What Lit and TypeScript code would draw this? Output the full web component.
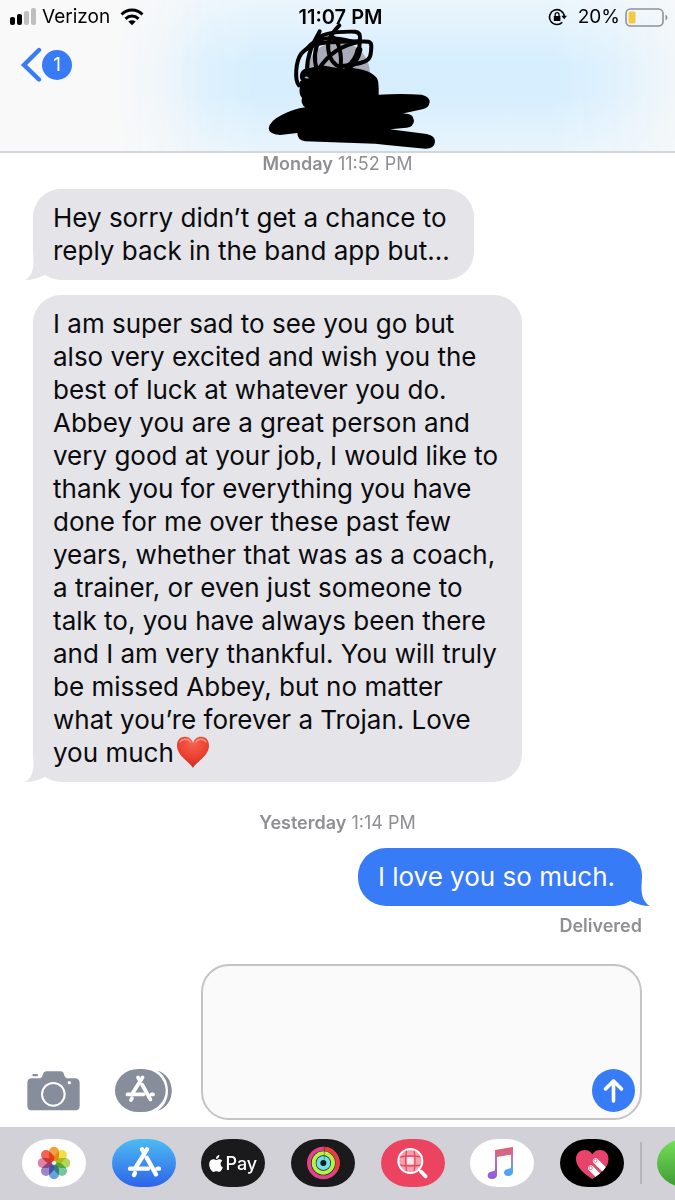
import { LitElement, html, svg, css } from "lit";
import { customElement, property } from "lit/decorators.js";

type Message = { from: "them" | "me"; lines: string[]; heart?: boolean };

const FIRST: Message[] = [
  {
    from: "them",
    lines: ["Hey sorry didn’t get a chance to", "reply back in the band app but..."],
  },
  {
    from: "them",
    heart: true,
    lines: [
      "I am super sad to see you go but",
      "also very excited and wish you the",
      "best of luck at whatever you do.",
      "Abbey you are a great person and",
      "very good at your job, I would like to",
      "thank you for everything you have",
      "done for me over these past few",
      "years, whether that was as a coach,",
      "a trainer, or even just someone to",
      "talk to, you have always been there",
      "and I am very thankful. You will truly",
      "be missed Abbey, but no matter",
      "what you’re forever a Trojan. Love",
      "you much",
    ],
  },
];

const REPLY: Message = { from: "me", lines: ["I love you so much."] };

const storeGlyph = (color: string) => svg`
  <g fill="none" stroke=${color} stroke-width="13" stroke-linecap="round">
    <path d="M105 31 L72 84" />
    <path d="M90 31 L97 42 M104 56 L132 106" />
    <path d="M54 89 H108 M136 89 H141" />
    <path d="M69 102 L66 108" />
  </g>`;

@customElement("chat-bubble")
class ChatBubble extends LitElement {
  @property({ attribute: false }) message!: Message;

  static styles = css`
    :host {
      display: flex;
    }
    .bubble {
      position: relative;
      padding: 12px 20px 13px;
      border-radius: 28px;
      font-size: 26px;
      line-height: 33px;
      white-space: pre-line;
    }
    .them {
      background: #e4e4e9;
      color: #0b0b0d;
      padding-right: 24px;
    }
    .me {
      margin-left: auto;
      background: #387bf6;
      color: #fff;
      padding-right: 27px;
    }
    .tail {
      position: absolute;
      bottom: 0;
      width: 24px;
      height: 24px;
    }
    .them .tail {
      left: -8px;
      fill: #e4e4e9;
    }
    .me .tail {
      right: -8px;
      fill: #387bf6;
    }
    .heart {
      width: 34px;
      height: 33px;
      margin: 0 0 0 2px;
      vertical-align: top;
    }
  `;

  render() {
    const m = this.message;
    const tail =
      m.from === "me"
        ? "M15.500 0 V6 C15.500 14 18 21 24 24 Q14 24 4.500 19 L9 0Z"
        : "M8.500 0 V6 C8.500 14 6 21 0 24 Q10 24 19.500 19 L15 0Z";
    return html`<div class="bubble ${m.from}">${m.lines.join("\n")}${m.heart
      ? html`<svg class="heart" viewBox="0 0 34 33" role="img" aria-label="red heart">
          <defs>
            <radialGradient id="hg" cx="0.5" cy="0.2" r="0.8">
              <stop offset="0" stop-color="#f8624f" />
              <stop offset="0.6" stop-color="#ea3f31" />
              <stop offset="1" stop-color="#c92a20" />
            </radialGradient>
          </defs>
          <path d="M17 32 C14 26 1 20 1 9.500 C1 4 4.500 .8 9 .8 C13 .8 16 3.500 17 7 C18 3.500 21 .8 25 .8 C29.500 .8 33 4 33 9.500 C33 20 20 26 17 32Z" fill="url(#hg)" />
          <path d="M4 6 C6 2.500 12 2 14.500 6 M20 6 C22.500 2 28 2.500 30 6" fill="none" stroke="#ffa79a" stroke-width="1.500" stroke-linecap="round" opacity=".75" />
        </svg>`
      : ""}<svg class="tail" viewBox="0 0 24 24" aria-hidden="true"><path d=${tail} /></svg></div>`;
  }
}

@customElement("app-root")
class AppRoot extends LitElement {
  static styles = css`
    :host {
      display: flex;
      flex-direction: column;
      min-height: 100vh;
      overflow: hidden;
      background: #fff;
      color: #000;
      font-family: Inter, "Liberation Sans", sans-serif;
    }
    button {
      border: 0;
      padding: 0;
      background: none;
      font: inherit;
      color: inherit;
      cursor: pointer;
    }
    svg {
      display: block;
    }
    .header {
      position: relative;
      box-sizing: border-box;
      height: 153px;
      border-bottom: 2px solid #d3d7db;
      background: #f9f9f9;
    }
    .glow {
      position: absolute;
      inset: 0;
      background: linear-gradient(#ebf5fc, #d6eefe 42%, #d6eefe 62%, #e8f4fc);
      mask-image: linear-gradient(
        to right,
        transparent 17%,
        rgb(0 0 0 / 0.25) 24%,
        rgb(0 0 0 / 0.8) 31%,
        #000 38%,
        #000 82%,
        rgb(0 0 0 / 0.75) 90%,
        rgb(0 0 0 / 0.2) 100%
      );
    }
    .status {
      position: relative;
      display: grid;
      grid-template-columns: 1fr auto 1fr;
      align-items: center;
      height: 34px;
      padding: 0 7px 0 9px;
      font-size: 19px;
      line-height: 24px;
    }
    .side {
      display: flex;
      align-items: center;
      gap: 5px;
    }
    .end {
      justify-content: flex-end;
    }
    .time {
      padding-left: 4px;
      font-size: 20px;
      font-weight: 600;
    }
    .wifi {
      margin-left: 5px;
    }
    .lock {
      margin-right: 5px;
    }
    .back {
      position: relative;
      display: flex;
      align-items: center;
      margin: 13px 0 0 20px;
    }
    .count {
      width: 30px;
      height: 30px;
      border-radius: 50%;
      background: #387bf6;
      color: #fff;
      font-size: 19px;
      line-height: 30px;
      text-align: center;
    }
    .scribble {
      position: absolute;
      top: 0;
      left: calc(50% - 113px);
    }
    .thread {
      display: flex;
      flex-direction: column;
      gap: 15px;
      padding: 0 33px;
    }
    .stamp {
      margin: 0;
      text-align: center;
      font-size: 18px;
      line-height: 21px;
      color: #8e8e93;
    }
    .later {
      margin-top: 15px;
    }
    .stamp b,
    .receipt {
      font-weight: 600;
    }
    .receipt {
      margin: -6px 0 0;
      text-align: right;
      font-size: 18px;
      line-height: 21px;
      color: #8e8e93;
    }
    .composer {
      display: flex;
      align-items: flex-end;
      margin-top: auto;
      padding: 16px 33px 7px 27px;
    }
    .tool {
      margin-bottom: 8px;
    }
    .store {
      margin: 0 29px 8px 35px;
    }
    .field {
      position: relative;
      flex: 1;
      min-width: 0;
      display: flex;
    }
    .input {
      flex: 1;
      min-width: 0;
      height: 156px;
      box-sizing: border-box;
      margin: 0;
      padding: 12px 60px 12px 20px;
      border: 2px solid #c3c3c8;
      border-radius: 28px;
      background: #fafafa;
      font: 26px/33px Inter, "Liberation Sans", sans-serif;
      resize: none;
      outline: none;
    }
    .send {
      position: absolute;
      right: 7px;
      bottom: 8px;
    }
    .drawer {
      display: flex;
      align-items: center;
      box-sizing: border-box;
      height: 73px;
      padding: 0 0 1px 22px;
      background: #d1d1d7;
    }
    .apps {
      flex: 1;
      display: flex;
      justify-content: space-between;
    }
    .app {
      width: 64px;
      height: 48px;
      border-radius: 28px / 24px;
      overflow: hidden;
    }
    .white {
      background: #fff;
    }
    .appstore {
      background: linear-gradient(#4dbcf2, #2d63ea);
    }
    .dark {
      background: #1a1a1c;
    }
    .black {
      background: #000;
    }
    .red {
      background: #ec4460;
    }
    .pay {
      display: flex;
      align-items: center;
      justify-content: center;
      gap: 2px;
      color: #fff;
      font-size: 18px;
      font-weight: 500;
    }
    .divider {
      width: 2px;
      height: 42px;
      margin: 0 15px 0 16px;
      background: #b4b4ba;
    }
    .peek {
      width: 18px;
      overflow: hidden;
      display: flex;
    }
    .green {
      flex: none;
      background: linear-gradient(#75e05a, #3f9a33);
    }
    .petal {
      mix-blend-mode: multiply;
    }
  `;

  private header() {
    return html`<header class="header">
      <div class="glow"></div>
      <div class="status">
        <div class="side">
          <svg width="28" height="18" viewBox="0 0 28 18" role="img" aria-label="Signal strength">
            <rect x="1" y="9" width="5" height="8" rx="2" />
            <rect x="8" y="6" width="5" height="11" rx="2" />
            <rect x="15" y="3" width="5" height="14" rx="2" fill="#bfbfc1" />
            <rect x="22" y="0" width="5" height="17" rx="2" fill="#bfbfc1" />
          </svg>
          <span>Verizon</span>
          <svg class="wifi" width="24" height="18" viewBox="0 0 24 18" role="img" aria-label="Wi-Fi">
            <g fill="none" stroke="#000" stroke-width="3">
              <path d="M1.500 6.500 C7.500 .500 16.500 .500 22.500 6.500" />
              <path d="M5.500 10.800 C9.300 7.200 14.700 7.200 18.500 10.800" />
            </g>
            <path d="M8.300 13.500 Q12 10.800 15.700 13.500 L12 17.200Z" />
          </svg>
        </div>
        <span class="time">11:07 PM</span>
        <div class="side end">
          <svg class="lock" width="20" height="18" viewBox="0 0 20 18" role="img" aria-label="Rotation locked">
            <path d="M14.300 14.200 A7.400 7.400 0 1 1 16.300 8.500" fill="none" stroke="#000" stroke-width="1.600" />
            <path d="M13.300 7.800 H19 L16.200 11.300Z" />
            <rect x="5.800" y="8" width="6.600" height="5" rx=".6" />
            <path d="M7.200 8.500 V6.500 A1.900 1.900 0 0 1 11 6.500 V8.500" fill="none" stroke="#000" stroke-width="1.300" />
          </svg>
          <span>20%</span>
          <svg width="43" height="19" viewBox="0 0 43 19" role="img" aria-label="Battery">
            <rect x="1" y="1" width="37" height="17" rx="4.500" fill="none" stroke="#8d939b" stroke-width="1.600" />
            <rect x="3.500" y="3.500" width="7" height="12" rx="1.500" fill="#f6c940" />
            <path d="M40.500 6.500 Q42.500 7.500 42.500 9.500 Q42.500 11.500 40.500 12.500Z" fill="#8d939b" />
          </svg>
        </div>
      </div>
      <button class="back" aria-label="Back, 1 unread">
        <svg width="22" height="36" viewBox="0 0 22 36">
          <path d="M19 3 L4 18 L19 32.500" fill="none" stroke="#387bf6" stroke-width="4.400" stroke-linecap="round" stroke-linejoin="miter" />
        </svg>
        <span class="count">1</span>
      </button>
      <svg class="scribble" width="225" height="152" viewBox="0 0 675 456" aria-hidden="true">
        <circle cx="340" cy="220" r="95" fill="#a9abb8" />
        <path d="M226 220 Q232 204 255 204 L290 196 L350 206 L378 203 Q440 210 456 235 Q462 245 461 284 Q530 280 590 284 Q614 290 614 306 Q612 324 592 328 L530 341 Q566 338 567 362 Q566 380 545 383 L495 388 L605 402 Q632 408 630 426 Q628 446 602 446 Q520 438 450 431 L240 424 Q217 420 217 399 L165 405 Q131 402 131 385 Q135 362 170 345 Q205 327 241 322 Q226 312 231 293 Q220 282 225 260 Q222 240 230 243 Q222 235 226 220Z" />
        <g fill="none" stroke="#000" stroke-width="12" stroke-linecap="round" stroke-linejoin="round">
          <path d="M222 256 C208 240 212 185 228 162 C245 140 280 128 310 127 C350 126 390 122 430 125 Q440 128 439 140 C438 165 436 178 420 184 C400 192 375 196 350 198" />
          <path d="M284 94 C272 118 246 155 246 212" />
          <path d="M343 76 C315 105 306 125 310 150 C314 178 325 196 350 202" />
          <path d="M272 120 C290 98 340 94 390 95 Q406 97 405 112 C404 150 400 175 375 198" />
          <path d="M405 125 C345 135 310 165 280 208" />
          <path d="M284 120 C266 150 268 185 276 210" />
          <path d="M325 112 C342 125 352 165 346 205" />
          <path d="M246 146 C275 105 330 112 380 124" />
          <path d="M402 150 C396 176 384 192 368 202" stroke-width="20" />
        </g>
        <path d="M238 232 Q246 226 252 234 Q244 238 238 232Z" fill="#a9abb8" />
      </svg>
    </header>`;
  }

  private photos() {
    const petals = ["#f4a040", "#efdf45", "#b2d560", "#78c79a", "#6aa0dc", "#a086c8", "#dc84a8", "#ef6452"];
    return svg`<svg viewBox="0 0 192 144" width="64" height="48">
      ${petals.map(
        (c, i) =>
          svg`<rect class="petal" x="81" y="23" width="30" height="44" rx="15" fill=${c} transform="rotate(${i * 45} 96 72)" />`
      )}
      <circle cx="96" cy="72" r="4" fill="#fff" />
    </svg>`;
  }

  private drawer() {
    return html`<nav class="drawer" aria-label="Message apps">
      <div class="apps">
        <button class="app white" aria-label="Photos">${this.photos()}</button>
        <button class="app appstore" aria-label="App Store">
          <svg viewBox="0 0 192 144" width="64" height="48">${storeGlyph("#fff")}</svg>
        </button>
        <button class="app dark pay">
          <svg width="14" height="17" viewBox="2 0 20 24" fill="#fff" aria-hidden="true">
            <path d="M12.152 6.896c-.948 0-2.415-1.078-3.960-1.040-2.040.027-3.910 1.183-4.961 3.014-2.117 3.675-.546 9.103 1.519 12.090 1.013 1.454 2.208 3.090 3.792 3.039 1.520-.065 2.090-.987 3.935-.987 1.831 0 2.350.987 3.960.948 1.637-.026 2.676-1.480 3.676-2.948 1.156-1.688 1.636-3.325 1.662-3.415-.039-.013-3.182-1.221-3.220-4.857-.026-3.040 2.480-4.494 2.597-4.559-1.429-2.090-3.623-2.324-4.390-2.376-2-.156-3.675 1.090-4.610 1.090zM15.530 3.830c.843-1.012 1.400-2.427 1.245-3.830-1.207.052-2.662.805-3.532 1.818-.780.896-1.454 2.338-1.273 3.714 1.338.104 2.715-.688 3.559-1.701" />
          </svg>
          <span>Pay</span>
        </button>
        <button class="app dark" aria-label="Activity">
          <svg viewBox="0 0 192 144" width="64" height="48" fill="none">
            <circle cx="97" cy="72" r="43" stroke="#e3418a" stroke-width="12" />
            <path d="M97 29 A43 43 0 0 1 134 94" stroke="#ea3d3f" stroke-width="12" />
            <circle cx="97" cy="72" r="29" stroke="#b4f24a" stroke-width="12" />
            <circle cx="97" cy="72" r="15" stroke="#6fdfe8" stroke-width="12" />
            <path d="M100 25 V62" stroke="#1a1a1c" stroke-width="2" opacity=".6" />
          </svg>
        </button>
        <button class="app red" aria-label="Image search">
          <svg viewBox="0 0 192 144" width="64" height="48">
            <circle cx="88" cy="66" r="36" fill="#f5a0ab" />
            <path d="M78 54 H98 V76 H78Z" fill="#fff" opacity=".75" />
            <path d="M77 32 Q71 66 77 100 M99 32 Q105 66 99 100 M54 54 Q88 48 122 54 M54 78 Q88 84 122 78" fill="none" stroke="#ec4460" stroke-width="4" />
            <circle cx="88" cy="66" r="36" fill="none" stroke="#fff" stroke-width="6" />
            <path d="M114 92 L120 98" stroke="#fff" stroke-width="6" />
            <path d="M120 98 L134 112" stroke="#fff" stroke-width="11" stroke-linecap="round" />
          </svg>
        </button>
        <button class="app white" aria-label="Music">
          <svg viewBox="0 0 192 144" width="64" height="48">
            <defs>
              <linearGradient id="mg" gradientUnits="userSpaceOnUse" x1="0" y1="24" x2="0" y2="120">
                <stop offset="0" stop-color="#dd5f76" />
                <stop offset=".35" stop-color="#cf6c90" />
                <stop offset="1" stop-color="#8a5cf0" />
              </linearGradient>
              <linearGradient id="mb" gradientUnits="userSpaceOnUse" x1="0" y1="24" x2="0" y2="110">
                <stop offset="0" stop-color="#dd5f76" />
                <stop offset=".35" stop-color="#b97bb8" />
                <stop offset=".8" stop-color="#4fa5f5" />
              </linearGradient>
            </defs>
            <path d="M75 33 L129 24 V46 L81 54 V107 C81 116 73 120 66 120 C58 120 53 116 53 110 C53 102 59 98 68 97 C73 96 75 95 75 91Z" fill="url(#mg)" />
            <path d="M123 30 L129 24 V98 C129 107 122 111 115 111 C107 111 102 107 102 101 C102 93 108 90 116 89 C121 88 123 87 123 83Z" fill="url(#mb)" />
          </svg>
        </button>
        <button class="app black" aria-label="Digital Touch">
          <svg viewBox="0 0 192 144" width="64" height="48">
            <defs>
              <clipPath id="hc"><path d="M97 120 C84 112 48 88 48 60 C48 30 85 24 97 46 C109 24 146 30 146 60 C146 88 110 112 97 120Z" /></clipPath>
            </defs>
            <g clip-path="url(#hc)">
              <rect width="192" height="144" fill="#e8446b" />
              <g stroke="#fff" stroke-width="17" stroke-linecap="round">
                <path d="M107 66 L150 109" />
                <path d="M93 88 L130 125" />
              </g>
              <g fill="none" stroke="#e8446b" stroke-width="2">
                <circle cx="106" cy="65" r="5" />
                <circle cx="92" cy="87" r="5" />
              </g>
            </g>
          </svg>
        </button>
      </div>
      <div class="divider"></div>
      <div class="peek"><button class="app green" aria-label="More"></button></div>
    </nav>`;
  }

  render() {
    return html`
      ${this.header()}
      <main class="thread">
        <p class="stamp"><b>Monday</b> 11:52 PM</p>
        ${FIRST.map((m) => html`<chat-bubble .message=${m}></chat-bubble>`)}
        <p class="stamp later"><b>Yesterday</b> 1:14 PM</p>
        <chat-bubble .message=${REPLY}></chat-bubble>
        <p class="receipt">Delivered</p>
      </main>
      <div class="composer">
        <button class="tool" aria-label="Camera">
          <svg width="53" height="41" viewBox="0 0 159 123">
            <path d="M14 22 H40 Q46 20 48 10 Q50 1 59 1 H100 Q109 1 111 10 Q114 21 120 22 H143 Q158 22 158 36 V104 Q158 118 143 118 H15 Q1 118 1 104 V36 Q1 22 14 22Z" fill="#878d9a" />
            <rect x="16" y="9" width="17" height="7" rx="3" fill="#878d9a" />
            <circle cx="79" cy="70" r="34" fill="none" stroke="#fff" stroke-width="6" />
            <circle cx="127" cy="35" r="5" fill="#fff" />
          </svg>
        </button>
        <button class="store" aria-label="Apps">
          <svg width="57" height="43" viewBox="0 0 171 129">
            <rect x="0" y="0" width="152" height="129" rx="70" ry="64" fill="#878d9a" />
            <path d="M126 5 C185 18 185 112 126 125 C170 104 170 26 126 5Z" fill="#878d9a" />
            <g transform="translate(-10 -2) scale(.88)">${storeGlyph("#fff")}</g>
          </svg>
        </button>
        <div class="field">
          <textarea class="input" aria-label="Message"></textarea>
          <button class="send" aria-label="Send">
            <svg width="43" height="43" viewBox="0 0 43 43">
              <circle cx="21.500" cy="21.500" r="21.500" fill="#387bf6" />
              <path d="M21.500 32 V12 M13.500 20 L21.500 12 L29.500 20" fill="none" stroke="#fff" stroke-width="3.600" stroke-linecap="round" stroke-linejoin="round" />
            </svg>
          </button>
        </div>
      </div>
      ${this.drawer()}
    `;
  }
}
